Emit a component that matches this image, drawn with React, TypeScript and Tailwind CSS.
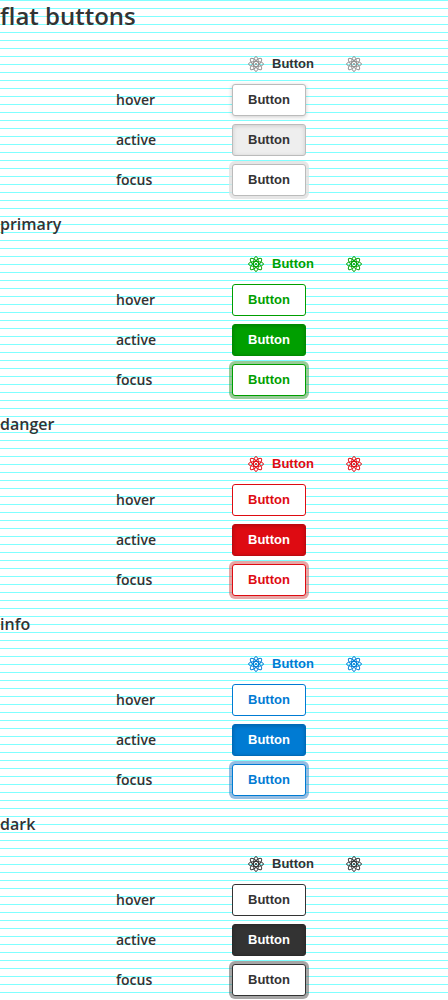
import React from "react";

type Theme = {
  name: string;
  text: string;
  icon: string;
  hover: string;
  active: string;
  focus: string;
};

const themes: Theme[] = [
  {
    name: "",
    text: "text-[#333333]",
    icon: "text-[#919191]",
    hover: "border-[#bbbbbb] shadow-[0_1px_4px_rgba(0,0,0,0.2)]",
    active: "border-[#bbbbbb] bg-[#eeeeee] text-[#333333] shadow-[inset_0_1px_4px_rgba(0,0,0,0.15)]",
    focus: "border-[#bbbbbb] shadow-[0_0_0_3px_rgba(221,221,221,0.75)]",
  },
  {
    name: "primary",
    text: "text-[#009f00]",
    icon: "text-[#009f00]",
    hover: "border-[#009f00]",
    active: "border-[#008b00] bg-[#009f00] text-white shadow-[inset_0_1px_4px_rgba(0,0,0,0.2)]",
    focus: "border-[#009f00] shadow-[0_0_0_3px_rgba(51,151,51,0.5)]",
  },
  {
    name: "danger",
    text: "text-[#de0b12]",
    icon: "text-[#de0b12]",
    hover: "border-[#de0b12]",
    active: "border-[#be0910] bg-[#de0b12] text-white shadow-[inset_0_1px_4px_rgba(0,0,0,0.2)]",
    focus: "border-[#de0b12] shadow-[0_0_0_3px_rgba(208,77,77,0.5)]",
  },
  {
    name: "info",
    text: "text-[#007bd3]",
    icon: "text-[#007bd3]",
    hover: "border-[#007bd3]",
    active: "border-[#006ab8] bg-[#007bd3] text-white shadow-[inset_0_1px_4px_rgba(0,0,0,0.2)]",
    focus: "border-[#007bd3] shadow-[0_0_0_3px_rgba(46,123,197,0.5)]",
  },
  {
    name: "dark",
    text: "text-[#333333]",
    icon: "text-[#333333]",
    hover: "border-[#333333]",
    active: "border-[#2a2a2a] bg-[#333333] text-white shadow-[inset_0_1px_4px_rgba(0,0,0,0.2)]",
    focus: "border-[#333333] shadow-[0_0_0_3px_rgba(77,77,77,0.5)]",
  },
];

function AtomIcon() {
  return (
    <svg className="size-4 shrink-0" viewBox="0 0 16 16" fill="none" stroke="currentColor" strokeWidth="0.95">
      <ellipse cx="8" cy="8" rx="7.5" ry="2.5" />
      <ellipse cx="8" cy="8" rx="7.5" ry="2.5" transform="rotate(45 8 8)" />
      <ellipse cx="8" cy="8" rx="7.5" ry="2.5" transform="rotate(90 8 8)" />
      <ellipse cx="8" cy="8" rx="7.5" ry="2.5" transform="rotate(135 8 8)" />
      <circle cx="8" cy="8" r="1.1" fill="currentColor" stroke="none" />
    </svg>
  );
}

const base =
  "flex h-8 items-center rounded-[3px] border px-[15px] font-['Liberation_Sans',sans-serif] text-[13px] leading-4 font-bold";

function StateRow({ label, className }: { label: string; className: string }) {
  return (
    <div className="grid h-10 grid-cols-[116px_216px] items-center pl-[116px]">
      <span className="text-sm leading-5 font-semibold">{label}</span>
      <div className="flex">
        <button className={`${base} ${className}`}>Button</button>
      </div>
    </div>
  );
}

function Group({ theme }: { theme: Theme }) {
  return (
    <section className="pb-1">
      {theme.name && (
        <h3 className="flex h-10 items-center text-base leading-6 font-semibold">{theme.name}</h3>
      )}
      <div className={`flex h-9 items-end pl-[232px] ${theme.text}`}>
        <button className={`${base} gap-2 border-transparent`}>
          <span className={theme.icon}>
            <AtomIcon />
          </span>
          Button
        </button>
        <button className={`${base} border-transparent ${theme.icon}`} aria-label="Atom">
          <AtomIcon />
        </button>
      </div>
      <StateRow label="hover" className={`bg-white ${theme.text} ${theme.hover}`} />
      <StateRow label="active" className={theme.active} />
      <StateRow label="focus" className={`bg-white ${theme.text} ${theme.focus}`} />
    </section>
  );
}

export default function App() {
  return (
    <main className="h-[1000px] w-[448px] overflow-hidden bg-white bg-[linear-gradient(to_bottom,#80ffff_1px,transparent_1px)] bg-[length:8px_8px] font-['Open_Sans',sans-serif] text-[#333333]">
      <h2 className="mb-3 flex h-8 items-center text-2xl leading-8 font-semibold">flat buttons</h2>
      {themes.map((theme) => (
        <Group key={theme.name} theme={theme} />
      ))}
    </main>
  );
}
